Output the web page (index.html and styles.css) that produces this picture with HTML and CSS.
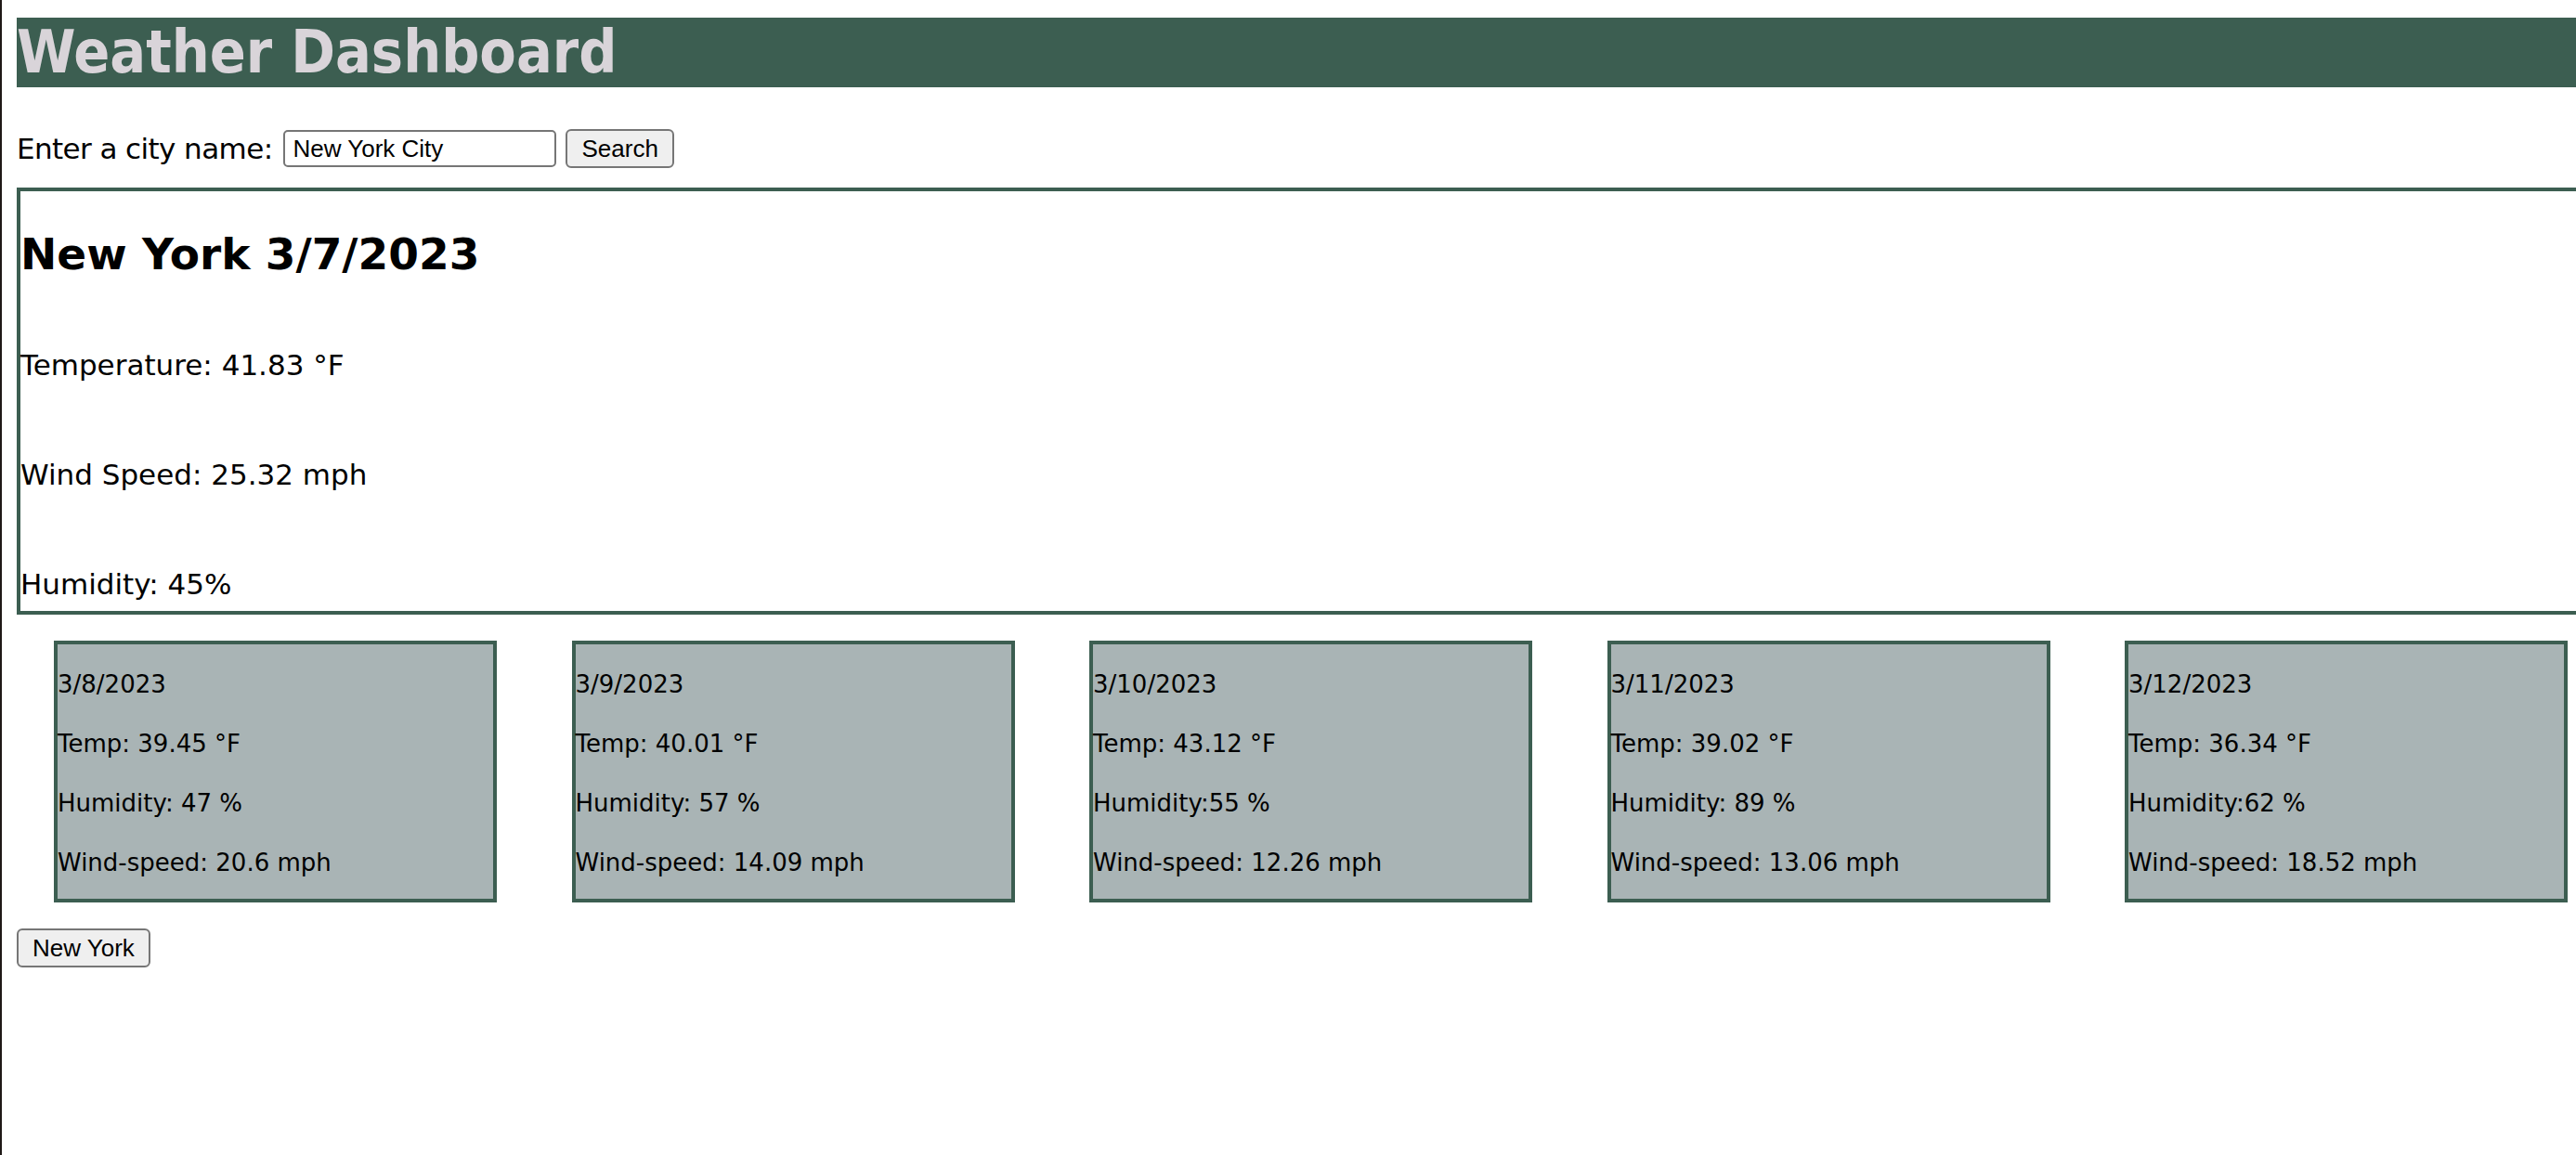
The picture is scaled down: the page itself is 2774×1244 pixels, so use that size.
FILE: index.html
```html
<!DOCTYPE html>
<html lang="en">
<head>
<meta charset="utf-8">
<title>Weather Dashboard</title>
<link rel="stylesheet" href="styles.css">
</head>
<body>
  <header class="site-header">
    <h1 class="site-title">Weather Dashboard</h1>
  </header>

  <form class="search-form">
    <label class="search-label" for="city">Enter a city name:</label>
    <input class="search-input" id="city" type="text" value="New York City">
    <button class="btn" type="button">Search</button>
  </form>

  <section class="current">
    <h2 class="current-title">New York 3/7/2023</h2>
    <p class="current-line">Temperature: 41.83 °F</p>
    <p class="current-line">Wind Speed: 25.32 mph</p>
    <p class="current-line">Humidity: 45%</p>
  </section>

  <section class="forecast">
    <div class="card">
      <p class="card-line">3/8/2023</p>
      <p class="card-line">Temp: 39.45 °F</p>
      <p class="card-line">Humidity: 47 %</p>
      <p class="card-line">Wind-speed: 20.6 mph</p>
    </div>
    <div class="card">
      <p class="card-line">3/9/2023</p>
      <p class="card-line">Temp: 40.01 °F</p>
      <p class="card-line">Humidity: 57 %</p>
      <p class="card-line">Wind-speed: 14.09 mph</p>
    </div>
    <div class="card">
      <p class="card-line">3/10/2023</p>
      <p class="card-line">Temp: 43.12 °F</p>
      <p class="card-line">Humidity:55 %</p>
      <p class="card-line">Wind-speed: 12.26 mph</p>
    </div>
    <div class="card">
      <p class="card-line">3/11/2023</p>
      <p class="card-line">Temp: 39.02 °F</p>
      <p class="card-line">Humidity: 89 %</p>
      <p class="card-line">Wind-speed: 13.06 mph</p>
    </div>
    <div class="card">
      <p class="card-line">3/12/2023</p>
      <p class="card-line">Temp: 36.34 °F</p>
      <p class="card-line">Humidity:62 %</p>
      <p class="card-line">Wind-speed: 18.52 mph</p>
    </div>
  </section>

  <div class="history">
    <button class="btn" type="button">New York</button>
  </div>
</body>
</html>
```

FILE: styles.css
```css
html {
  min-height: 100%;
  border-left: 2px solid #1f1917;
  overflow: hidden;
  background: #ffffff;
}

body {
  margin: 19px 0 0 16px;
  font-family: "DejaVu Sans", "Liberation Sans", sans-serif;
  font-size: 31px;
  color: #000000;
}

.site-header {
  background: #3c5e51;
}

.site-title {
  margin: 0;
  font-family: "DejaVu Sans Condensed", "DejaVu Sans", sans-serif;
  font-stretch: condensed;
  font-weight: bold;
  font-size: 64px;
  line-height: 75px;
  color: #d9d4d9;
}

.search-form {
  display: flex;
  align-items: center;
  margin: 46px 0 0;
  height: 40px;
}

.search-label {
  margin-right: 12px;
  letter-spacing: -0.6px;
}

.search-input {
  box-sizing: border-box;
  width: 294px;
  height: 40px;
  margin: 0 10px 0 0;
  padding: 0 8px;
  border: 2px solid #767676;
  border-radius: 5px;
  font-family: "Liberation Sans", Arial, sans-serif;
  font-size: 26px;
  color: #000000;
  background: #ffffff;
}

.btn {
  box-sizing: border-box;
  height: 42px;
  padding: 0 15px;
  border: 2px solid #767676;
  border-radius: 6px;
  background: #efefef;
  font-family: "Liberation Sans", Arial, sans-serif;
  font-size: 26px;
  color: #000000;
}

.current {
  margin-top: 22px;
  width: calc(100% + 40px);
  border: 4px solid #3c5e51;
  padding: 0 0 11px;
}

.current-title {
  margin: 48px 0 0;
  font-size: 47px;
  line-height: 39px;
  font-weight: bold;
}

.current-line {
  margin: 82px 0 0;
  line-height: 36px;
}

.forecast {
  display: flex;
  gap: 80.5px;
  margin-top: 28px;
  padding-left: 40px;
}

.card {
  box-sizing: border-box;
  flex: 0 0 477px;
  display: flex;
  flex-direction: column;
  gap: 34px;
  padding: 28px 0 24px;
  border: 4px solid #3c5e51;
  background: #a9b4b5;
}

.card-line {
  margin: 0;
  font-size: 26px;
  line-height: 30px;
}

.history {
  margin-top: 28px;
}
```
